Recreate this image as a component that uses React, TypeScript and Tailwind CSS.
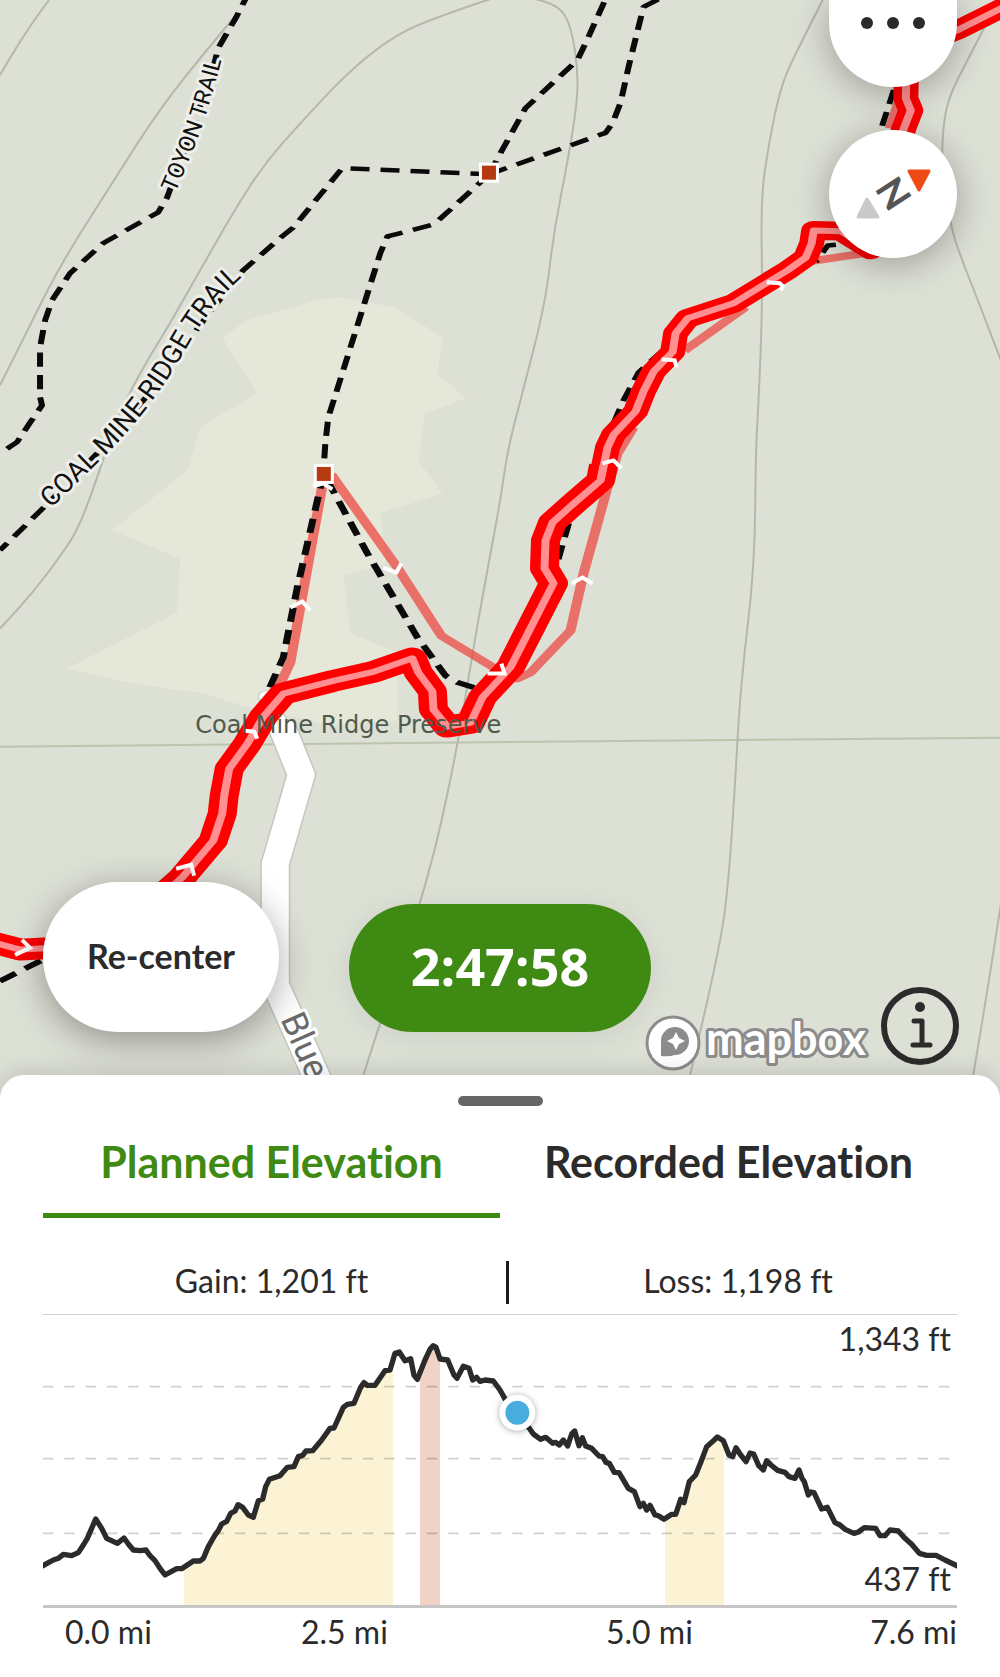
import { useState } from "react";

type Point = [number, number];

// The map is seen from a pitched camera, so strokes are flatter than they are wide
const PITCH = 0.75;

const toLine = (points: Point[]) => "M" + points.map(([x, y]) => `${x},${y}`).join("L");

const toPitched = (points: Point[]) =>
  toLine(points.map(([x, y]): Point => [x, Math.round(y / PITCH)]));

const toSmooth = (points: Point[]) => {
  let d = `M${points[0][0]},${points[0][1]}`;
  for (let i = 1; i < points.length - 1; i++) {
    const [x, y] = points[i];
    const [nx, ny] = points[i + 1];
    d += `Q${x},${y} ${(x + nx) / 2},${(y + ny) / 2}`;
  }
  const last = points[points.length - 1];
  return d + `L${last[0]},${last[1]}`;
};

const contours: Point[][] = [
  [[49, 0], [28, 28], [0, 75]],
  [[236, 15], [208, 48], [160, 108], [115, 178], [60, 265], [25, 335], [0, 385]],
  [[490, -1], [427, 20], [387, 40], [345, 75], [300, 123], [263, 165], [233, 212], [200, 270], [167, 328], [143, 367], [118, 415], [102, 463], [80, 525], [63, 552], [33, 592], [0, 628]],
  [[530, -2], [550, 2], [565, 14], [572, 35], [577, 67], [577, 100], [568, 157], [553, 233], [545, 303], [520, 400], [507, 450], [500, 500], [485, 580], [472, 653], [455, 758], [427, 883], [378, 1027], [353, 1106]],
  [[822, 0], [793, 57], [780, 87], [768, 143], [760, 200], [762, 300], [758, 400], [755, 450], [754, 567], [740, 683], [734, 790], [728, 880], [720, 943], [682, 1106]],
  [[990, 15], [965, 63], [948, 97], [942, 127], [941, 170], [950, 227], [960, 257], [977, 300], [1000, 360]],
  [[1000, 903], [987, 987], [967, 1106]],
];

const clearing: Point[] = [
  [222, 337], [247, 320], [317, 300], [337, 297], [395, 307], [442, 337], [437, 373], [465, 398],
  [425, 413], [418, 460], [442, 493], [380, 513], [385, 563], [343, 575], [350, 633], [397, 652],
  [397, 720], [330, 724], [250, 707], [200, 692], [133, 683], [67, 668], [177, 612], [180, 558],
  [112, 530], [187, 470], [200, 427], [257, 393],
];

const trailsFar: Point[][] = [
  [[249, -8], [236, 17], [218, 48], [213, 68], [190, 135], [167, 197], [158, 212], [147, 218], [103, 243], [70, 273], [52, 300], [45, 320], [40, 347], [40, 397], [42, 405], [30, 422], [17, 442], [0, 453]],
  [[489, 174], [342, 168], [293, 227], [280, 238], [243, 270], [205, 318], [150, 392], [100, 450], [43, 508], [0, 550]],
  [[489, 174], [480, 182], [440, 218], [433, 224], [387, 236], [380, 253], [328, 417], [325, 443], [323, 474]],
  [[489, 174], [500, 153], [525, 108], [577, 60], [588, 37], [607, -5]],
  [[489, 174], [605, 133], [612, 123], [620, 103], [628, 67], [643, 7], [664, -4]],
  [[662, 350], [638, 372], [623, 400], [612, 425]],
  [[865, 242], [827, 245], [815, 262]],
  [[893, 90], [880, 130]],
  [[957, 22], [975, 13], [985, 8]],
];

const trailsNear: Point[][] = [
  [[323, 474], [317, 500], [297, 587], [283, 657], [268, 690]],
  [[327, 480], [367, 553], [417, 637], [445, 675], [457, 682], [476, 688]],
  [[568, 523], [562, 543], [555, 568]],
  [[0, 980], [45, 958]],
];

const recorded: Point[][] = [
  [[323, 480], [290, 662], [272, 700]],
  [[331, 474], [397, 567], [441, 635], [493, 667], [517, 678], [530, 672], [570, 630], [583, 573], [608, 483], [617, 453], [633, 427]],
  [[684, 350], [745, 307]],
  [[805, 262], [870, 252]],
  [[901, 92], [889, 128]],
];

const routeNear: Point[][] = [
  [[-5, 942], [20, 949], [50, 947]],
  [[150, 905], [182, 877], [213, 840], [222, 813], [224, 795], [229, 768], [247, 743], [263, 716], [283, 693], [333, 680], [373, 671], [412, 658], [418, 672], [432, 691], [433, 709], [447, 726], [470, 722], [482, 697], [510, 667], [553, 583], [544, 568], [545, 540], [552, 522], [573, 503], [600, 480], [603, 465]],
];

const routeFar: Point[][] = [
  [[600, 480], [607, 447], [613, 434], [635, 411], [643, 391], [653, 371], [672, 352], [675, 333], [687, 318], [733, 303], [787, 270], [805, 257], [811, 243], [813, 230], [840, 231], [870, 250], [903, 128], [910, 110], [905, 98], [906, 50], [957, 30], [1005, 6]],
];

const chevrons: Point[][] = [
  [[766, 282], [779, 283], [782, 286], [780, 290]],
  [[661, 359], [674, 360], [676, 367]],
  [[602, 463], [613, 460], [621, 468]],
  [[571, 583], [582, 577], [592, 583]],
  [[487, 673], [504, 673], [501, 663]],
  [[383, 567], [396, 572], [401, 563]],
  [[290, 607], [302, 601], [310, 610]],
  [[244, 730], [254, 731], [257, 738]],
  [[176, 868], [191, 864], [194, 875]],
  [[22, 939], [30, 947], [15, 954]],
  [[313, 486], [323, 483], [332, 489]],
];

const road: Point[] = [[266, 696], [280, 722], [301, 774], [275, 863], [275, 983], [330, 1106]];

const markers: Point[] = [[489, 173], [324, 474]];

const elevation: Point[] = [
  [125, 799], [160, 780], [175, 775], [190, 763], [215, 767], [235, 758], [250, 735], [262, 715], [287, 657], [305, 685],
  [320, 715], [352, 730], [372, 714], [385, 732], [400, 750], [420, 752], [438, 750], [450, 767], [465, 782], [480, 805],
  [495, 825], [530, 806], [545, 806], [580, 783], [600, 783], [610, 775], [625, 740], [645, 705], [655, 692], [665, 672],
  [680, 664], [692, 640], [705, 633], [714, 614], [728, 622], [745, 645], [760, 652], [775, 602], [788, 597], [797, 560],
  [808, 538], [840, 527], [862, 502], [882, 500], [895, 470], [908, 466], [918, 453], [938, 452], [965, 420], [990, 385],
  [1002, 384], [1030, 322], [1042, 313], [1062, 310], [1082, 262], [1092, 248], [1102, 256], [1125, 256], [1155, 212],
  [1170, 210], [1185, 160], [1198, 156], [1215, 182], [1232, 176], [1242, 226], [1252, 238], [1275, 180], [1290, 148],
  [1300, 137], [1308, 142], [1320, 177], [1343, 180], [1362, 225], [1371, 235], [1390, 199], [1407, 205], [1418, 240],
  [1430, 232], [1440, 244], [1455, 240], [1480, 243], [1500, 270], [1515, 297], [1552, 340], [1588, 385], [1600, 402],
  [1622, 418], [1637, 412], [1658, 430], [1667, 427], [1678, 435], [1690, 420], [1703, 438], [1715, 402], [1724, 393],
  [1737, 437], [1747, 413], [1757, 438], [1775, 445], [1797, 468], [1808, 470], [1818, 487], [1828, 490], [1843, 517],
  [1857, 518], [1885, 565], [1903, 575], [1920, 620], [1930, 610], [1940, 630], [1950, 616], [1965, 645], [1975, 647],
  [1992, 658], [2015, 643], [2027, 643], [2042, 598], [2052, 608], [2068, 545], [2087, 525], [2103, 485], [2120, 440],
  [2135, 427], [2152, 411], [2170, 422], [2187, 465], [2198, 470], [2208, 443], [2220, 462], [2238, 485], [2250, 459],
  [2261, 462], [2276, 497], [2290, 510], [2300, 482], [2313, 495], [2333, 511], [2355, 517], [2367, 530], [2385, 535],
  [2397, 510], [2406, 535], [2413, 545], [2425, 585], [2433, 576], [2442, 578], [2465, 627], [2482, 622], [2505, 668],
  [2520, 675], [2535, 688], [2562, 700], [2575, 696], [2593, 683], [2627, 685], [2640, 707], [2655, 707], [2670, 690],
  [2695, 693], [2715, 715], [2735, 733], [2758, 760], [2780, 766], [2808, 766], [2835, 780], [2875, 799],
];

const TrailMap = () => (
  <svg
    className="absolute inset-0 size-full"
    viewBox="0 0 1000 1106"
    preserveAspectRatio="xMinYMin slice"
    role="img"
    aria-label="Trail map of Coal Mine Ridge Preserve"
  >
    <rect width="1000" height="1106" fill="#dde0d5" />
    <path d={toLine(clearing) + "Z"} fill="#e5e8d8" />
    <path d="M0,746L1000,737" stroke="#bdc4ae" strokeWidth="2" />
    <g fill="none" stroke="#b4b7ab" strokeWidth="2">
      {contours.map((points, i) => (
        <path key={i} d={toSmooth(points)} />
      ))}
    </g>

    <g transform={`scale(1 ${PITCH})`} fill="none" strokeLinejoin="round">
      <path d={toPitched(road.slice(0, 2))} stroke="#c9ccc3" strokeWidth="17" strokeLinecap="round" />
      <path d={toPitched(road.slice(1))} stroke="#c3c6bd" strokeWidth="30" />
      <path d={toPitched(road.slice(0, 2))} stroke="#fff" strokeWidth="14" strokeLinecap="round" />
      <path d={toPitched(road.slice(1))} stroke="#fff" strokeWidth="27" />
      <g stroke="#f0352f" strokeOpacity="0.66" strokeWidth="10">
        {recorded.map((points, i) => (
          <path key={i} d={toPitched(points)} />
        ))}
      </g>
      <g stroke="#0a0a0a" strokeDasharray="19 11">
        {trailsFar.map((points, i) => (
          <path key={i} d={toPitched(points)} strokeWidth="6" />
        ))}
        {trailsNear.map((points, i) => (
          <path key={i} d={toPitched(points)} strokeWidth="7" />
        ))}
      </g>
      <g stroke="#fe0000">
        {routeNear.map((points, i) => (
          <path key={i} d={toPitched(points)} strokeWidth="29" />
        ))}
        {routeFar.map((points, i) => (
          <path key={i} d={toPitched(points)} strokeWidth="25" />
        ))}
      </g>
      <g stroke="#ff8f90" strokeWidth="8">
        {[...routeNear, ...routeFar].map((points, i) => (
          <path key={i} d={toPitched(points)} />
        ))}
      </g>
    </g>

    <g fill="none" stroke="#fff" strokeWidth="4">
      {chevrons.map((points, i) => (
        <path key={i} d={toLine(points)} />
      ))}
    </g>

    {markers.map(([x, y]) => (
      <rect key={x} x={x - 9} y={y - 9} width="17" height="17" fill="#b53a10" stroke="#fff" strokeWidth="3" />
    ))}

    <path id="toyon" d="M175,193Q194,150 204,120T229,30" fill="none" />
    <path id="coal-mine" d="M51,508L98,462Q150,412 185,350T262,262" fill="none" />
    <path id="blue" d="M280,1018L335,1142" fill="none" />
    <g className="font-[Roboto,sans-serif] [paint-order:stroke]" stroke="#eeefea" strokeWidth="6" strokeLinejoin="round">
      <text fontSize="23" fill="#111">
        <textPath href="#toyon">TOYON TRAIL</textPath>
      </text>
      <text fontSize="27" fill="#111">
        <textPath href="#coal-mine">COAL MINE RIDGE TRAIL</textPath>
      </text>
      <text fontSize="35" fill="#6a6a6a" stroke="#fff">
        <textPath href="#blue">Blue</textPath>
      </text>
    </g>
    <text x="195" y="732" fontSize="24" fill="#4f5a4c" className="font-['DejaVu_Sans',sans-serif]">
      Coal Mine Ridge Preserve
    </text>
  </svg>
);

const CompassIcon = () => (
  <svg viewBox="0 0 128 128" className="size-full" aria-hidden="true">
    <path d="M80,41H100L90,60Z" fill="#ee4b14" stroke="#ee4b14" strokeWidth="3" strokeLinejoin="round" />
    <path d="M38,69L49,87H29Z" fill="#c9c9c9" stroke="#c9c9c9" strokeWidth="3" strokeLinejoin="round" />
    <text
      x="64"
      y="77"
      fontSize="38"
      textAnchor="middle"
      fill="#555"
      transform="rotate(57 64 64)"
      className="font-bold"
    >
      N
    </text>
  </svg>
);

const MapboxLogo = () => (
  <svg viewBox="0 -8 228 66" className="w-[228px]" role="img" aria-label="Mapbox">
    <circle cx="28" cy="29" r="26" fill="#fff" stroke="#8c8c8c" strokeWidth="3" />
    <path d="M16,42V28A14,14 0 1 1 30,41Q24,43 16,42Z" fill="#8c8c8c" />
    <path d="M31,18L34,24L40,27L34,30L31,36L28,30L22,27L28,24Z" fill="#fff" />
    <text
      x="61"
      y="41"
      fontSize="45"
      fill="#fff"
      stroke="#8c8c8c"
      strokeWidth="6"
      strokeLinejoin="round"
      className="font-bold [paint-order:stroke]"
    >
      mapbox
    </text>
  </svg>
);

const InfoIcon = () => (
  <svg viewBox="0 0 78 78" className="size-full" fill="none" stroke="#2b2b2b" aria-hidden="true">
    <circle cx="39" cy="39" r="36" strokeWidth="6" />
    <circle cx="39" cy="20" r="5" fill="#2b2b2b" stroke="none" />
    <path d="M33,34H41V58M32,58H49" strokeWidth="5" strokeLinecap="round" strokeLinejoin="round" />
  </svg>
);

const ElevationChart = () => (
  <div className="relative mt-2.5 border-t border-b-3 border-t-[#cfcfcf] border-b-[#c6c6c6]">
    <svg viewBox="129 45 2742 870" className="block w-full" role="img" aria-label="Elevation profile">
      <clipPath id="under-profile">
        <path d={toLine(elevation) + "V915H125Z"} />
      </clipPath>
      <g clipPath="url(#under-profile)">
        <rect x="552" y="45" width="628" height="870" fill="#fcf3d4" />
        <rect x="1260" y="45" width="60" height="870" fill="#f0d2c7" />
        <rect x="1995" y="45" width="177" height="870" fill="#fcf3d4" />
      </g>
      <path
        d="M129,260H2850M129,476H2850M129,700H2850"
        stroke="#000"
        strokeOpacity="0.18"
        strokeWidth="5"
        strokeDasharray="31 33"
      />
      <path d={toLine(elevation)} fill="none" stroke="#2b2b2b" strokeWidth="16" strokeLinejoin="round" />
      <circle cx="1552" cy="338" r="54" fill="#fff" className="drop-shadow-[0_2px_10px_rgba(0,0,0,0.35)]" />
      <circle cx="1552" cy="338" r="36" fill="#48acdf" />
    </svg>
    <span className="absolute top-1 right-1.5">1,343 ft</span>
    <span className="absolute right-1.5 bottom-1.5">437 ft</span>
  </div>
);

const tabs = ["Planned Elevation", "Recorded Elevation"];

const App = () => {
  const [active, setActive] = useState(tabs[0]);

  return (
    <main className="flex min-h-screen flex-col bg-white font-[Lato,sans-serif] text-[#2b2b2b] [font-variant-ligatures:none]">
      <section className="relative -mb-8 min-h-[640px] flex-1 overflow-hidden bg-[#dde0d5]">
        <TrailMap />

        <div className="absolute top-0 right-[43px] flex w-32 flex-col gap-[43px]">
          <button
            aria-label="More options"
            className="flex h-[87px] justify-center gap-3.5 rounded-b-[64px] bg-white pt-[17px] shadow-[0_6px_36px_rgba(0,0,0,0.3)]"
          >
            <span className="size-3 rounded-full bg-[#2b2b2b]" />
            <span className="size-3 rounded-full bg-[#2b2b2b]" />
            <span className="size-3 rounded-full bg-[#2b2b2b]" />
          </button>
          <button aria-label="Reset north" className="size-32 rounded-full bg-white shadow-[0_6px_36px_rgba(0,0,0,0.3)]">
            <CompassIcon />
          </button>
        </div>

        <div className="absolute right-[41px] bottom-[35px] flex items-end gap-2">
          <MapboxLogo />
          <button aria-label="Map information" className="mb-[7px] size-[78px]">
            <InfoIcon />
          </button>
        </div>

        <div className="pointer-events-none absolute inset-x-0 bottom-[75px] grid grid-cols-[1fr_auto_1fr] items-end px-[43px]">
          <button className="pointer-events-auto h-[150px] w-[236px] rounded-full bg-white pb-1 text-[34px] font-bold shadow-[0_8px_36px_rgba(0,0,0,0.35)]">
            Re-center
          </button>
          <button className="pointer-events-auto h-32 w-[302px] rounded-full bg-[#3f8a13] pb-1 font-['Open_Sans',sans-serif] text-[52px] font-bold text-white shadow-[0_4px_30px_rgba(0,0,0,0.08)]">
            2:47:58
          </button>
        </div>
      </section>

      <section className="relative rounded-t-3xl bg-white px-[43px] pt-[21px] pb-[25px] text-[32px] leading-10 shadow-[0_-2px_24px_rgba(0,0,0,0.15)]">
        <div className="mx-auto h-2.5 w-[85px] rounded-full bg-[#666]" />

        <div role="tablist" className="mt-8 grid grid-cols-2">
          {tabs.map((tab) => (
            <button
              key={tab}
              role="tab"
              aria-selected={tab === active}
              onClick={() => setActive(tab)}
              className={
                "border-b-5 pb-[27px] text-[43px] leading-12 font-bold " +
                (tab === active ? "border-[#3f8a13] text-[#3f8a13]" : "border-transparent")
              }
            >
              {tab}
            </button>
          ))}
        </div>

        <div className="mt-[43px] grid grid-cols-2 text-center">
          <p>Gain: 1,201 ft</p>
          <div className="flex gap-2.5 pl-1.5">
            <span className="h-[43px] w-[3px] bg-[#1c1c1c]" />
            <p className="flex-1">Loss: 1,198 ft</p>
          </div>
        </div>

        <ElevationChart />

        <div className="mt-1 grid grid-cols-[236fr_305fr_351fr] pl-[22px]">
          <span>0.0 mi</span>
          <span>2.5 mi</span>
          <div className="flex justify-between">
            <span>5.0 mi</span>
            <span>7.6 mi</span>
          </div>
        </div>
      </section>
    </main>
  );
};

export default App;
